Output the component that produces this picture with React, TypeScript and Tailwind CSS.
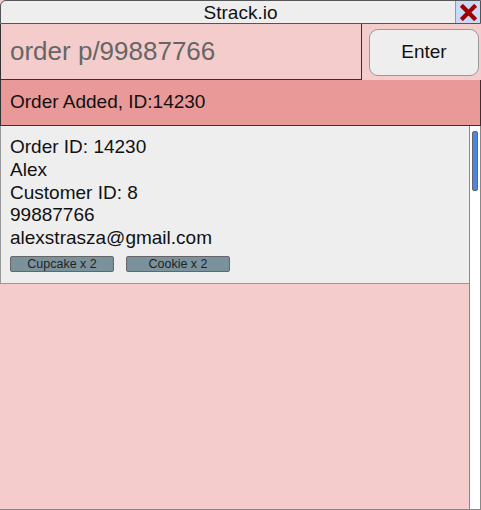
import React from 'react'

const font = { fontFamily: '"Liberation Sans", Arial, sans-serif' }

function CloseIcon() {
  return (
    <svg width="17" height="17" viewBox="0 0 18 18">
      <path d="M3 3 L15 15 M15 3 L3 15" stroke="#a00000" strokeWidth="4.5" strokeLinecap="square" />
    </svg>
  )
}

export default function App() {
  const lines = ['Order ID: 14230', 'Alex', 'Customer ID: 8', '99887766', 'alexstrasza@gmail.com']
  const items = ['Cupcake x 2', 'Cookie x 2']

  return (
    <div className="flex h-[510px] w-[481px] flex-col bg-[#f4cccc] text-[#111]" style={font}>
      {/* title bar */}
      <div className="flex h-[24px] shrink-0 rounded-tl-[6px] border border-[#555] bg-[#eeeeee]">
        <div className="flex flex-1 items-center justify-center pl-[25px] text-[19px] leading-none">Strack.io</div>
        <div className="flex w-[25px] items-center justify-center border-l border-[#999] bg-[#c9daf8]">
          <CloseIcon />
        </div>
      </div>

      {/* command input */}
      <div className="flex h-[56px] shrink-0">
        <div className="flex w-[362px] items-center border-x border-b border-[#333] bg-[#f4cccc] pl-[9px] text-[26px] text-[#666]">
          order p/99887766
        </div>
        <div className="flex flex-1 items-center pl-[7px] pr-[2px]">
          <button className="flex h-[47px] w-full items-center justify-center rounded-[9px] border border-[#999] bg-[#eeeeee] text-[19px]">
            Enter
          </button>
        </div>
      </div>

      {/* status */}
      <div className="flex h-[46px] shrink-0 items-center border-x border-b border-[#333] bg-[#ea9999] pl-[9px] text-[19px]">
        Order Added, ID:14230
      </div>

      {/* order list */}
      <div className="flex min-h-0 flex-1 border-b border-[#888]">
        <div className="flex-1">
          <div className="border-b border-l border-[#999] bg-[#eeeeee] pb-[11px] pl-[9px] pt-[10px]">
            {lines.map((l) => (
              <div key={l} className="text-[19px] leading-[22.8px]">
                {l}
              </div>
            ))}
            <div className="mt-[6px] flex gap-[12px]">
              {items.map((i) => (
                <span
                  key={i}
                  className="flex h-[16px] w-[104px] items-center justify-center rounded-[2px] border border-[#666] bg-[#7b929c] text-[12.5px] leading-none text-[#222]"
                >
                  {i}
                </span>
              ))}
            </div>
          </div>
        </div>
        <div className="flex w-[12px] justify-center border-x border-[#888] bg-white pt-[5px]">
          <div className="h-[60px] w-[6px] rounded-[2px] border border-[#666] bg-[#4a86e8]" />
        </div>
      </div>
    </div>
  )
}
